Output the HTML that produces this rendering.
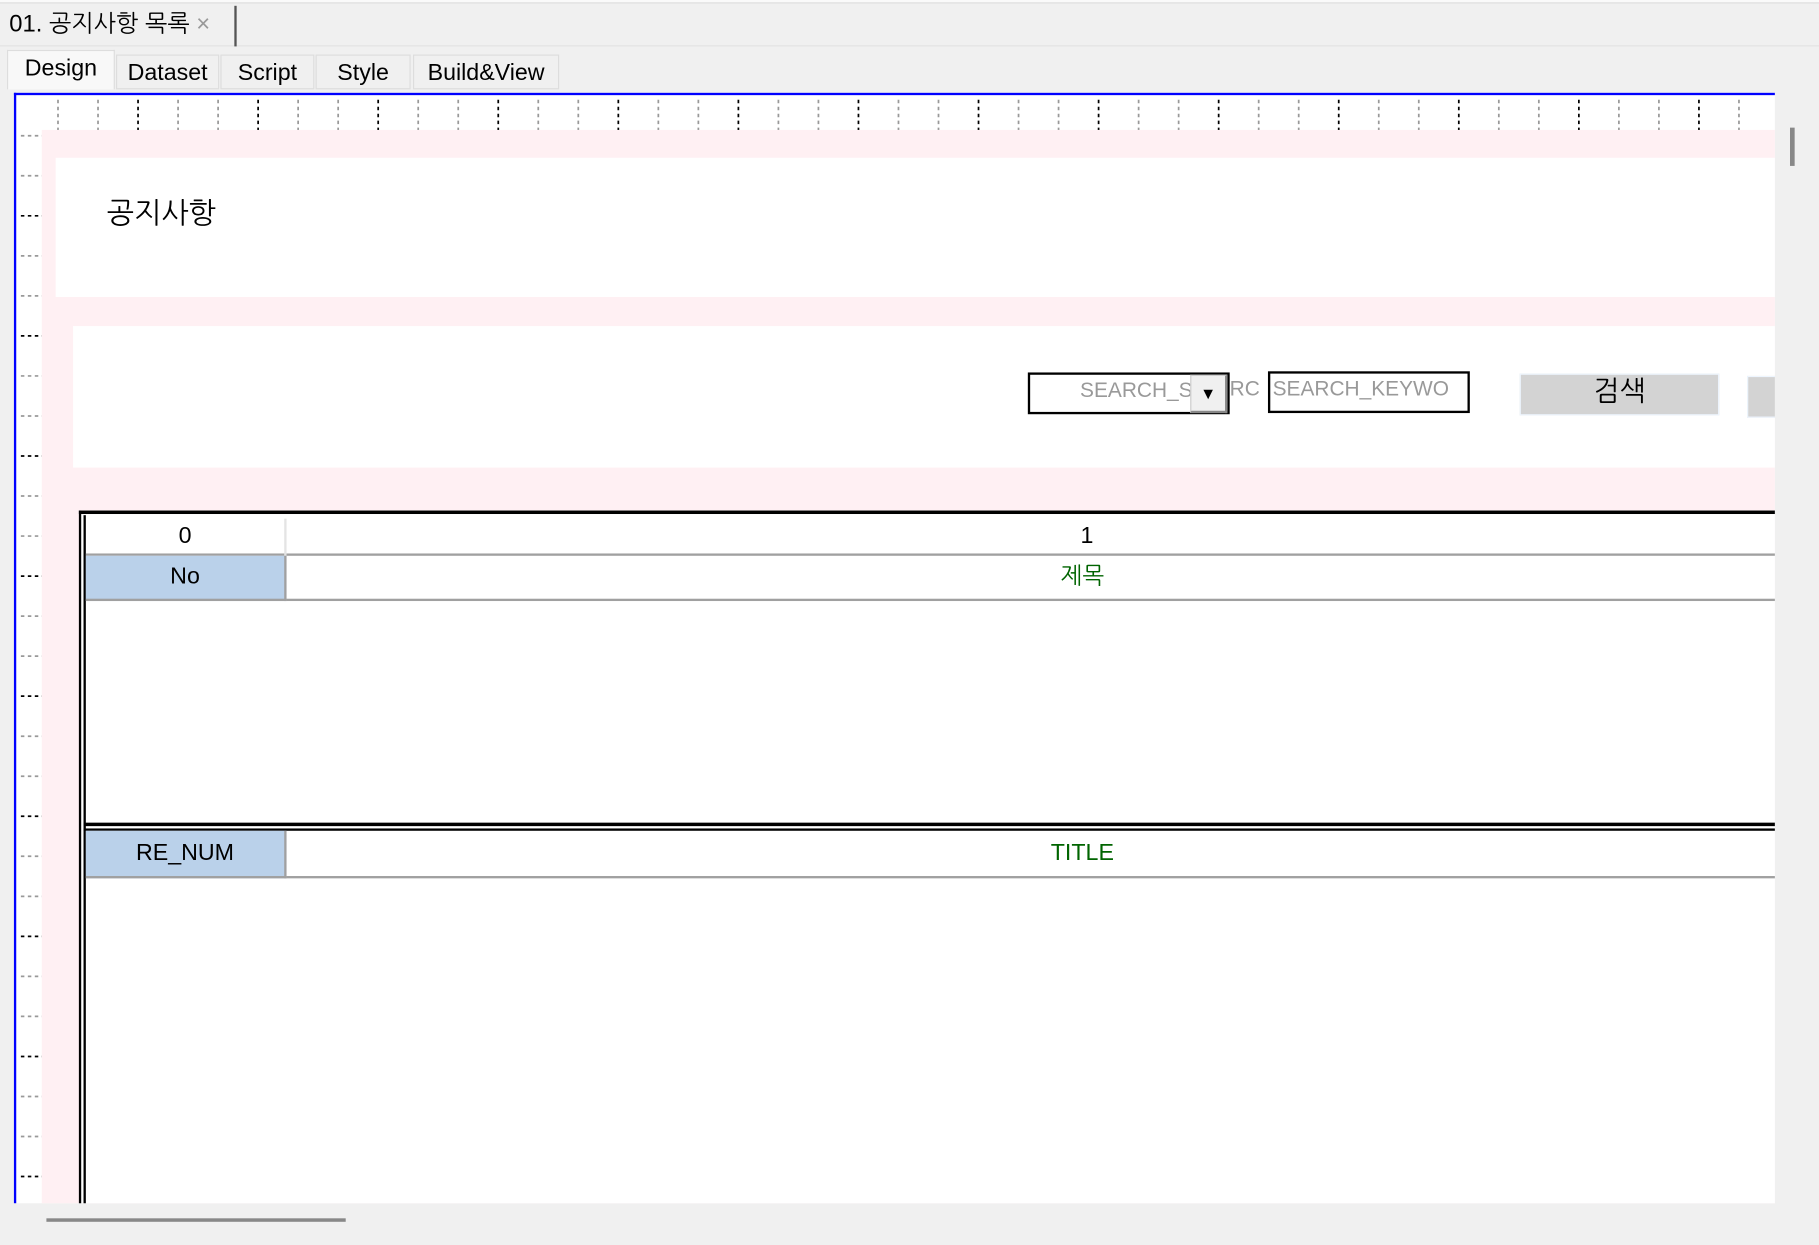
<!DOCTYPE html>
<html><head><meta charset="utf-8"><style>
html,body{margin:0;padding:0;width:1819px;height:1245px;overflow:hidden;background:#f0f0f0}
#s{position:absolute;left:0;top:0;width:1568px;height:1073px;transform:scale(1.16008,1.1603);transform-origin:0 0;font-family:"Liberation Sans","NanumGothic","Noto Sans CJK KR",sans-serif;background:#f0f0f0}
.a{position:absolute;box-sizing:border-box}
.t{font-size:20px;color:#000;text-align:center;line-height:30px}
</style></head><body><div id="s">
<div class="a" style="left:0;top:0;width:1568px;height:3px;background:#fafafa;border-bottom:1px solid #ddd"></div>
<div class="a" style="left:0;top:4px;width:1568px;height:36px;background:#f0f0f0;border-bottom:1px solid #e2e2e2"></div>
<div class="a" style="left:0;top:5px;width:204px;height:35px;border-right:2px solid #555;font-size:20.5px;line-height:32px;padding-left:8px;white-space:nowrap">01. 공지사항 목록 <span style="color:#999">×</span></div>
<div class="a t" style="left:6px;top:43px;width:93px;height:34px;background:#f8f8f8;border:1px solid #ddd;border-bottom:none">Design</div>
<div class="a t" style="left:100px;top:47px;width:89px;height:30px;border:1px solid #ddd">Dataset</div>
<div class="a t" style="left:190px;top:47px;width:81px;height:30px;border:1px solid #ddd">Script</div>
<div class="a t" style="left:272px;top:47px;width:82px;height:30px;border:1px solid #ddd">Style</div>
<div class="a t" style="left:356px;top:47px;width:126px;height:30px;border:1px solid #ddd">Build&amp;View</div>
<div class="a" style="left:12px;top:80px;width:1518px;height:957px;background:#fff;border-top:2px solid #0000ff;border-left:2px solid #0000ff;overflow:hidden">
<svg class="a" style="left:-12px;top:-80px" width="1530" height="1037">
<g stroke-width="1.5" stroke-dasharray="3,3">
<g id="tk"></g>
</g>
</svg>
<div class="a" style="left:22px;top:30px;width:1500px;height:930px;background:#fff0f3"></div>
<div class="a" style="left:34px;top:54px;width:1500px;height:120px;background:#fff"></div>
<div class="a" style="left:78px;top:86px;font-size:25px">공지사항</div>
<div class="a" style="left:49px;top:199px;width:1500px;height:122px;background:#fff"></div>
<div class="a" style="left:872px;top:239px;width:174px;height:36px;border:2px solid #000;background:#fff;overflow:hidden"><span class="a" style="left:43px;top:3px;font-size:18px;color:#999">SEARCH_SEARC</span></div>
<div class="a" style="left:1012px;top:241px;width:32px;height:33px;background:#f0f0f0;border:1px solid #ccc;border-right:2px solid #888;border-bottom:2px solid #888;font-size:14px;text-align:center;line-height:30px">▼</div>
<div class="a" style="left:1046px;top:243px;font-size:18px;color:#999">RC</div>
<div class="a" style="left:1079px;top:238px;width:174px;height:36px;border:2px solid #000;background:#fff;font-size:18px;color:#999;line-height:26px;padding-left:2px">SEARCH_KEYWO</div>
<div class="a" style="left:1296px;top:240px;width:172px;height:36px;background:#d3d3d3;border:1px solid #eef6ff;font-size:24px;text-align:center;line-height:30px">검색</div>
<div class="a" style="left:1492px;top:242px;width:40px;height:36px;background:#d3d3d3;border:1px solid #eef6ff"></div>
<div class="a" style="left:54px;top:358px;width:1500px;height:620px;background:#fff;border-top:3px solid #000;border-left:2px solid #000"></div>
<div class="a" style="left:58px;top:362px;width:2px;height:600px;background:#000"></div>
<div class="a" style="left:60px;top:363px;width:1500px;height:34px;border-bottom:2px solid #a0a0a0"></div>
<div class="a t" style="left:60px;top:365px;width:173px;height:32px;border-right:2px solid #e4e4e4">0</div>
<div class="a t" style="left:233px;top:365px;width:1380px;height:32px">1</div>
<div class="a t" style="left:60px;top:397px;width:173px;height:39px;background:#bad1ea;border-right:2px solid #a0a0a0;border-bottom:2px solid #a0a0a0;line-height:37px">No</div>
<div class="a t" style="left:233px;top:397px;width:1500px;height:39px;border-bottom:2px solid #a0a0a0"></div>
<div class="a t" style="left:233px;top:397px;width:1372px;height:39px;color:#006400;line-height:37px">제목</div>
<div class="a" style="left:58px;top:627px;width:1500px;height:3px;background:#000"></div>
<div class="a" style="left:58px;top:632px;width:1500px;height:2px;background:#000"></div>
<div class="a t" style="left:60px;top:634px;width:173px;height:41px;background:#bad1ea;border-right:2px solid #a0a0a0;border-bottom:2px solid #a0a0a0;line-height:39px">RE_NUM</div>
<div class="a t" style="left:233px;top:634px;width:1500px;height:41px;border-bottom:2px solid #a0a0a0"></div>
<div class="a t" style="left:233px;top:634px;width:1372px;height:41px;color:#006400;line-height:39px">TITLE</div>
</div>
<div class="a" style="left:1530px;top:80px;width:38px;height:957px;background:#f0f0f0"></div>
<div class="a" style="left:1543px;top:110px;width:4px;height:33px;background:#888"></div>
<div class="a" style="left:40px;top:1050px;width:258px;height:3px;background:#888"></div>
</div>
<script>
var g=document.getElementById('tk'),h='';
for(var i=0;i<44;i++){var x=48+i*34.5;var d=(i%3==2);h+='<line x1="'+x+'" y1="84" x2="'+x+'" y2="112" stroke="'+(d?'#000':'#999')+'"/>';}
for(var j=0;j<27;j++){var y=115+j*34.5;var d2=(j%3==2);h+='<line x1="16" y1="'+y+'" x2="37" y2="'+y+'" stroke="'+(d2?'#000':'#999')+'"/>';}
g.innerHTML=h;
</script>
</body></html>
